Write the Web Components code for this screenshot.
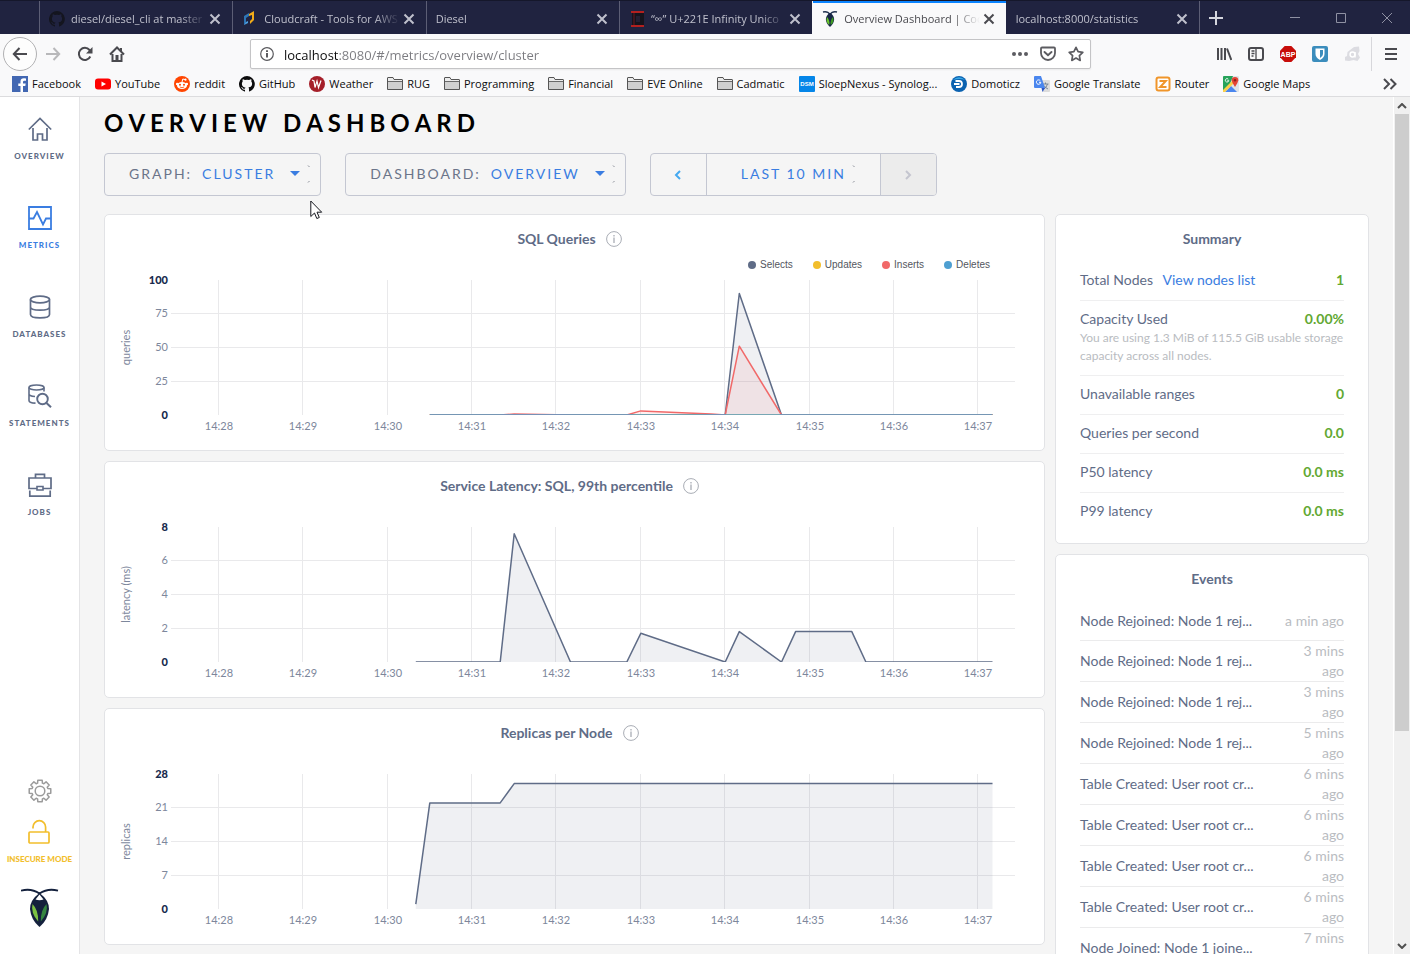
<!DOCTYPE html>
<html lang="en">
<head>
<meta charset="utf-8">
<title>Overview Dashboard | Cockroach Console</title>
<style>
html,body{margin:0;height:100%}
body{overflow:hidden;font-family:Lato,"Open Sans",sans-serif;background:#f5f5f5}
</style>
</head>
<body>
<browser-window></browser-window>
<script>
const svg=(w,h,body,extra='')=>`<svg width="${w}" height="${h}" viewBox="0 0 ${w} ${h}" fill="none" aria-hidden="true" ${extra}>${body}</svg>`;

const gearPath=(()=>{
  const p=[];
  for(let i=0;i<8;i++){
    const a=i*Math.PI/4-Math.PI/2;
    [[-.3,8.2],[-.2,11],[.2,11],[.3,8.2]].forEach(([d,r])=>p.push((12+r*Math.cos(a+d)).toFixed(2)+' '+(12+r*Math.sin(a+d)).toFixed(2)));
  }
  return 'M'+p.join('L')+'Z';
})();

const octocat='<path fill="currentColor" d="M8 0a8 8 0 0 0-2.5 15.6c.4.1.5-.2.5-.4v-1.5c-2.2.5-2.7-.9-2.7-.9-.4-.9-.9-1.2-.9-1.2-.7-.5.1-.5.1-.5.8.1 1.2.8 1.2.8.7 1.3 1.9.9 2.3.7.1-.5.3-.9.5-1.1-1.8-.2-3.6-.9-3.6-4 0-.9.3-1.6.8-2.1-.1-.2-.4-1 .1-2.1 0 0 .7-.2 2.2.8a7.600 7.600 0 0 1 4 0c1.500-1 2.200-.8 2.200-.8.4 1.100.2 1.900.1 2.100.5.600.8 1.300.8 2.100 0 3.100-1.900 3.700-3.700 3.900.3.300.6.800.6 1.500v2.200c0 .2.100.5.600.4A8 8 0 0 0 8 0z"/>';

const ICONS={
  close:svg(12,12,'<path d="M1.500 1.500l9 9m0-9l-9 9" stroke="currentColor" stroke-width="2"/>'),
  github:svg(16,16,octocat),
  cloudcraft:svg(16,16,'<path d="M2 5l5-3v3L4 7v5l-2 2z" fill="#2e75b5"/><path d="M2 14l4-2v-2l-2 1z" fill="#4c9fe0"/><path d="M7 3l5-3v9l-4 4v-3l2-2V4L7 5z" fill="#f2ab18"/>'),
  infinity:svg(16,16,'<path d="M3 2h12v12H3z" fill="#15141d"/><path d="M2 1h13M2 15h13" stroke="#b3201f" stroke-width="2"/><path d="M7 5h4v6H7z" fill="#241f33"/><path d="M5 2v12" stroke="#6a1720"/>'),
  roach:svg(16,16,'<path d="M1 1c4-1 6 1 7 2.500C9 2 11 0 15 1" stroke="#213250" stroke-width="1.300"/><path d="M8 2c6 3 5 10 0 14C3 12 2 5 8 2z" fill="#172746"/><path d="M5 6c2 2 3 5 2.200 8C4.500 12 4 9 5 6z" fill="#6bc52c"/><path d="M11 6c-2 2-3 5-2.200 8C11.500 12 12 9 11 6z" fill="#3f9b22"/>'),
  back:svg(16,16,'<path d="M15 8H2M7.500 2L1.800 8l5.700 6" stroke="#4a4a4f" stroke-width="2"/>'),
  forward:svg(16,16,'<path d="M1 8h13M8.500 2l5.700 6-5.700 6" stroke="#b8b8ba" stroke-width="2"/>'),
  reload:svg(16,16,'<path d="M13.300 10.500A6 6 0 1 1 12.500 4L14 5.500" stroke="#4a4a4f" stroke-width="2"/><path d="M15.500 1v6.500H9z" fill="#4a4a4f"/>'),
  home:svg(16,16,'<path d="M1 8.500L8 1.500l7 7M3.500 8v7h9V8" stroke="#4a4a4f" stroke-width="2"/><path d="M6.500 9h3v6h-3zM11 2h2v3h-2z" fill="#4a4a4f"/>'),
  info:svg(16,16,'<circle cx="8" cy="8" r="6.300" stroke="#5a5a5e" stroke-width="1.200"/><path d="M8 7v4.500M8 4.300v1.600" stroke="#4a4a4f" stroke-width="1.800"/>'),
  dots:svg(16,16,'<g fill="#5c5c61"><circle cx="2" cy="8" r="2"/><circle cx="8" cy="8" r="2"/><circle cx="14" cy="8" r="2"/></g>'),
  pocket:svg(16,16,'<path d="M1 2.500q0-1 1-1h12q1 0 1 1V7a7 7 0 0 1-14 0z" stroke="#5c5c61" stroke-width="1.800"/><path d="M4.500 6L8 9.300 11.500 6" stroke="#5c5c61" stroke-width="1.900" stroke-linecap="round"/>'),
  star:svg(16,16,'<path d="M8 1.300l2.100 4.300 4.700.7-3.400 3.300.8 4.800L8 12.100l-4.200 2.300.8-4.800L1.200 6.300l4.700-.7z" stroke="#5c5c61" stroke-width="1.700" stroke-linejoin="round"/>'),
  library:svg(16,16,'<path d="M2 2v12M5.500 2v12M9 2v12M11 2.500L15.300 14" stroke="#4a4a4f" stroke-width="2"/>'),
  sidebar:svg(16,16,'<rect x="1" y="2" width="14" height="12" rx="2" stroke="#4a4a4f" stroke-width="2"/><path d="M8 2v12M3.500 5h3M3.500 7.500h3M3.500 10h2" stroke="#4a4a4f" stroke-width="1.300"/>'),
  abp:svg(16,16,'<path d="M4.700 0h6.600L16 4.700v6.600L11.300 16H4.700L0 11.300V4.700z" fill="#c70d0a"/><text x="8" y="11" text-anchor="middle" font-family="Liberation Sans,sans-serif" font-weight="700" font-size="7" fill="#fff">ABP</text>'),
  shield:svg(16,16,'<rect width="16" height="16" rx="2" fill="#3c8dbc"/><path d="M3.500 2.500h9V8q0 3.500-4.500 6Q3.500 11.500 3.500 8z" fill="#fff"/><path d="M8 4h3v4q0 2.300-3 4z" fill="#3c8dbc"/>'),
  avast:svg(16,16,'<path d="M10 1l5-.5.5 4.500L14 8l2 3.500-2.500 3.500-4-1L5 15 1 14.500V11l2-1 .5-4L8 2.500z" fill="#dcdce1"/><circle cx="8.500" cy="8.500" r="2.400" stroke="#fff" stroke-width="1.500"/><path d="M11 6v5.500" stroke="#fff" stroke-width="1.500"/>'),
  menu:svg(16,16,'<path d="M2 3h12M2 8h12M2 13h12" stroke="#4a4a4f" stroke-width="2"/>'),
  more:svg(16,16,'<path d="M2 3l5 5-5 5M8.500 3l5 5-5 5" stroke="#4a4a4f" stroke-width="2"/>'),
  facebook:svg(16,16,'<path d="M0 0h16v16H0z" fill="#4267b2"/><path d="M11 16V10h2.300l.4-2.500H11V6q0-1.200 1.300-1.200H14V2.500q-5.500-1-5.500 3v2H6.300V10h2.200v6z" fill="#fff"/>'),
  youtube:svg(16,16,'<rect y="2.500" width="16" height="11" rx="3" fill="#f00"/><path d="M6.500 5.500v5L11 8z" fill="#fff"/>'),
  reddit:svg(16,16,'<circle cx="8" cy="8" r="8" fill="#ff4500"/><ellipse cx="8" cy="9.500" rx="5" ry="3.600" fill="#fff"/><circle cx="3.200" cy="8" r="1.300" fill="#fff"/><circle cx="12.800" cy="8" r="1.300" fill="#fff"/><path d="M8 6l.8-3 2.400.6" stroke="#fff"/><circle cx="11.500" cy="3.700" r="1.100" fill="#fff"/><circle cx="6" cy="8.700" r="1" fill="#ff4500"/><circle cx="10" cy="8.700" r="1" fill="#ff4500"/><path d="M5.800 11q2.200 1.400 4.400 0" stroke="#ff4500" stroke-width=".8"/>'),
  weather:svg(16,16,'<circle cx="8" cy="8" r="8" fill="#a51f29"/><path d="M3 4l2 1 1 6.500L8 5l1.500 6.500L12 4.500" stroke="#fff" stroke-width="1.200"/>'),
  folder:svg(16,16,'<path d="M.5 13.500V2q0-.5.5-.5h5l1 2h8q.5 0 .5.500v9.500z" fill="#d0d0d0" stroke="#555"/><path d="M1 5.500h14" stroke="#6a6a6a"/><path d="M1 2h4.700l1 2H15v1H1z" fill="#ececec"/>'),
  dsm:svg(16,16,'<rect width="16" height="16" rx="1" fill="#0586e8"/><text x="8" y="10" text-anchor="middle" font-family="Liberation Sans,sans-serif" font-weight="700" font-size="6" fill="#fff">DSM</text>'),
  domoticz:svg(16,16,'<circle cx="8" cy="8" r="8" fill="#0b62b0"/><path d="M2 4a8 8 0 0 1 12 0q-5-2-12 0z" fill="#39a8e6"/><path d="M4.500 5H8a3 3 0 0 1 0 6H5M3 8h5.500" stroke="#fff" stroke-width="1.800"/>'),
  translate:svg(16,16,'<path d="M6 4h9q1 0 1 1v10q0 1-1 1H9z" fill="#dcdcdc"/><path d="M8.500 8h6M11.500 6.500V8M13.500 8q-1 4-4 5M10 9.500q1.500 2.500 4 3.500" stroke="#6f7f90" stroke-width=".9"/><path d="M1 0h6l4 12H1q-1 0-1-1V1q0-1 1-1z" fill="#4a86ee"/><path d="M7.500 12H11l-2.500 4z" fill="#2b55c4"/><path d="M6.300 4.700A2.200 2.200 0 1 0 6.800 6.300H5" stroke="#fff"/>'),
  router:svg(16,16,'<rect x="1.500" y="1.500" width="13" height="13" rx="2" fill="#fff" stroke="#f0952a" stroke-width="2"/><path d="M4.500 5h6.300l-5.600 6h6.300" stroke="#f0952a" stroke-width="2"/>'),
  maps:svg(16,16,'<path d="M1 0h14q1 0 1 1v14q0 1-1 1H1q-1 0-1-1V1q0-1 1-1z" fill="#dfe3e8"/><path d="M0 1q0-1 1-1h9L7 8 0 15z" fill="#27a35a"/><path d="M2 16l6-6 6 6z" fill="#4a86ee"/><path d="M0 14L11 3l2 2L2 16H0z" fill="#fbd047"/><path d="M12 1a3.300 3.300 0 0 1 3.300 3.300Q15 7 12 11 9 7 8.700 4.300A3.300 3.300 0 0 1 12 1z" fill="#e34335"/><circle cx="12" cy="4.300" r="1.200" fill="#8c2019"/><path d="M5.300 3.200A1.700 1.700 0 1 0 5.700 4.600H4.400" stroke="#fff" stroke-width=".9"/>'),
  overview:svg(24,24,'<path d="M.800 12.500L12 1.500l11.200 11M5 11v12h4.500v-6h5v6H19V11" stroke="currentColor" stroke-width="1.700"/>'),
  metrics:svg(24,24,'<path d="M1 1h22v22H1zM1 12.500h4.500L9 6l6 12.500 3-6h5" stroke="currentColor" stroke-width="1.800"/>'),
  databases:svg(24,24,'<path d="M2.500 4.500v15C2.500 24 21.500 24 21.500 19.500v-15M2.500 12c0 4.200 19 4.200 19 0" stroke="currentColor" stroke-width="1.700"/><ellipse cx="12" cy="4.500" rx="9.500" ry="3.300" stroke="currentColor" stroke-width="1.700"/>'),
  statements:svg(24,24,'<ellipse cx="8.500" cy="3.500" rx="7.500" ry="2.500" stroke="currentColor" stroke-width="1.600"/><path d="M1 3.500v13c0 1.700 3 2.600 6.500 2.600M16 3.500v4M1 10c0 1.700 3 2.300 6 2.500" stroke="currentColor" stroke-width="1.600"/><circle cx="14.500" cy="15" r="5.300" stroke="currentColor" stroke-width="1.900"/><path d="M18.500 19l4.500 4.300" stroke="currentColor" stroke-width="2"/>'),
  jobs:svg(24,24,'<path d="M7.500 5V1.300h9V5M9 15.500H1V5h22v10.500h-8M1.800 17.500v5.700h20.400v-5.700" stroke="currentColor" stroke-width="1.700"/><path d="M9 13.500h6v3.500H9z" stroke="currentColor" stroke-width="1.600"/>'),
  gear:svg(24,24,`<path d="${gearPath}" stroke="#9b9b9b" stroke-width="1.500" stroke-linejoin="round"/><circle cx="12" cy="12" r="4.800" stroke="#9b9b9b" stroke-width="1.500"/>`),
  lock:svg(24,26,'<rect x="2" y="13" width="20" height="11" rx="1" stroke="#f2be2c" stroke-width="1.700"/><path d="M6 9.500V8a6.300 6.300 0 0 1 12.600 0v5" stroke="#f2be2c" stroke-width="1.700"/>'),
  logo:svg(38,40,'<path d="M0 2.700C8 .500 14 2.500 18.500 5.500 23 2.500 29 .500 37 2.700" stroke="#14213d" stroke-width="1.900"/><path d="M18.500 5Q28 12 28 21 27 32 18.500 39 10 32 9 21 9 12 18.500 5z" fill="#14213d"/><path d="M18.500 6.500l4 5q-4 1.500-8 0z" fill="#fff"/><path d="M11.500 16q6 6 5.700 17.500Q9.500 25 11.500 16z" fill="#7cc142"/><path d="M25.500 16q-6 6-5.700 17.500Q27.500 25 25.500 16z" fill="#348540"/>'),
  hint:svg(16,16,'<circle cx="8" cy="8" r="7.400" stroke="#a9adb5"/><path d="M8 6.500V12M8 4v1.400" stroke="#a9adb5" stroke-width="1.300"/>'),
  caret:svg(10,5,'<path d="M0 0h10L5 5z" fill="#3a7de1"/>'),
  corners:svg(4,18,'<path d="M1 .500l1.500 1.500M1 17.500L2.500 16" stroke="#8a8e98"/>'),
  prev:svg(8,10,'<path d="M6 1L2 5l4 4" stroke="#45a9f0" stroke-width="2"/>'),
  next:svg(8,10,'<path d="M2 1l4 4-4 4" stroke="#c4c5cf" stroke-width="2"/>'),
  plus:svg(16,16,'<path d="M8 1v14M1 8h14" stroke="#d5d6de" stroke-width="2"/>'),
  min:svg(12,12,'<path d="M1 5.500h10" stroke="#8f91a3"/>'),
  max:svg(12,12,'<path d="M1.500 1.500h9v9h-9z" stroke="#8f91a3"/>'),
  quit:svg(12,12,'<path d="M1 1l10 10M11 1L1 11" stroke="#8f91a3"/>'),
  up:svg(10,6,'<path d="M1 5l4-4 4 4" stroke="#505050" stroke-width="2"/>'),
  down:svg(10,6,'<path d="M1 1l4 4 4-4" stroke="#505050" stroke-width="2"/>'),
  pointer:svg(13,20,'<path d="M.800 1v15.500l3.700-3.500 2.300 5.500 2.500-1-2.300-5.300h4.700z" fill="#fff" stroke="#16181f"/>')
};

const base='*{box-sizing:border-box}svg{display:block;flex:none}button{font:inherit;color:inherit;background:none;border:0;padding:0;margin:0}';
const element=(tag,css,html)=>customElements.define(tag,class extends HTMLElement{
  connectedCallback(){
    if(this.shadowRoot)return;
    const root=this.attachShadow({mode:'open'});
    root.innerHTML=`<style>${base}:host{box-sizing:border-box}${css}</style>${typeof html==='function'?html(this):html}`;
  }
});
const at=(el,name)=>el.getAttribute(name)||'';

element('app-icon',':host{display:block;flex:none}',el=>ICONS[at(el,'name')]);

/* Browser chrome */
element('browser-tab',`
:host{display:flex;flex:1;min-width:0;align-items:center;padding:3px 11px 0 9px;border-left:1px solid #5c5e75;color:#bfc0cc;font-size:11px}
:host([active]){background:#f9f9fa;color:#4a4a4f;border-left-color:#f9f9fa;box-shadow:inset 0 2px #0a84ff}
:host([after]){border-left-color:#202340}
app-icon{margin-right:6px}
span{flex:1;min-width:0;overflow:hidden;white-space:nowrap;line-height:18px;mask-image:linear-gradient(90deg,#000 calc(100% - 26px),transparent)}
button{margin-left:3px}`,
el=>`${at(el,'icon')?`<app-icon name="${at(el,'icon')}" style="color:#14151f"></app-icon>`:''}<span><slot></slot></span><button aria-label="Close tab">${ICONS.close}</button>`);

element('tab-strip',`
:host{display:flex;height:34px;background:#202340;border-top:1px solid #15172b;font-family:"Open Sans",sans-serif}
.lead{width:39px}
.tabs{display:flex;flex:1;min-width:0}
.end{display:flex;width:211px;border-left:1px solid #5c5e75;align-items:center;padding-left:8px}
.win{display:flex;flex:1;justify-content:flex-end;gap:34px;padding-right:17px}`,
`<div class="lead"></div><div class="tabs">
<browser-tab icon="github">diesel/diesel_cli at master</browser-tab>
<browser-tab icon="cloudcraft">Cloudcraft - Tools for AWS</browser-tab>
<browser-tab>Diesel</browser-tab>
<browser-tab icon="infinity">“∞” U+221E Infinity Unico</browser-tab>
<browser-tab icon="roach" active>Overview Dashboard | Coc</browser-tab>
<browser-tab after>localhost:8000/statistics</browser-tab>
</div><div class="end"><button aria-label="New tab">${ICONS.plus}</button><div class="win"><button aria-label="Minimize">${ICONS.min}</button><button aria-label="Maximize">${ICONS.max}</button><button aria-label="Close window">${ICONS.quit}</button></div></div>`);

element('nav-toolbar',`
:host{display:flex;align-items:center;height:40px;background:#f9f9fa;padding:0 3px;font-family:"Open Sans",sans-serif}
button{width:32px;height:32px;display:grid;place-items:center;flex:none}
.back{width:34px;height:34px;border:1px solid #b1b1b3;border-radius:50%;background:#fdfdfd}
.gap{width:117px;flex:none}
.url{display:flex;flex:1;min-width:0;align-items:center;height:30px;background:#fff;border:1px solid #c4c4c6;border-radius:2px;box-shadow:0 1px 2px #0001;padding:0 0 0 8px}
input{flex:1;min-width:0;border:0;outline:0;padding:2px 0 0 9px;font:13px "Open Sans",sans-serif;color:transparent;background:linear-gradient(90deg,#0c0c0d 63px,#7b7b80 63px);background-clip:text;-webkit-background-clip:text}
.url button{width:28px;height:28px}
.rule{width:1px;height:34px;background:#d7d7db;margin:0 3px}`,
`<button class="back" aria-label="Back">${ICONS.back}</button><button aria-label="Forward">${ICONS.forward}</button><button aria-label="Reload">${ICONS.reload}</button><button aria-label="Home">${ICONS.home}</button>
<div class="gap"></div>
<div class="url">${ICONS.info}<input aria-label="Address" value="localhost:8080/#/metrics/overview/cluster"><button aria-label="Page actions">${ICONS.dots}</button><button aria-label="Save to Pocket">${ICONS.pocket}</button><button aria-label="Bookmark">${ICONS.star}</button></div>
<div class="gap"></div>
<button aria-label="Library">${ICONS.library}</button><button aria-label="Sidebars">${ICONS.sidebar}</button><button aria-label="Adblock Plus">${ICONS.abp}</button><button aria-label="Bitwarden">${ICONS.shield}</button><button aria-label="Avast">${ICONS.avast}</button><div class="rule"></div><button aria-label="Menu">${ICONS.menu}</button>`);

element('bookmark-item',`
:host{display:block;flex:none}
a{display:flex;align-items:center;gap:4px;color:#0c0c0d;text-decoration:none;white-space:nowrap;line-height:16px}`,
el=>`<a href="#">${ICONS[at(el,'icon')]}<slot></slot></a>`);

element('bookmarks-bar',`
:host{display:flex;align-items:center;gap:14px;height:23px;padding:0 12px 2px;background:#f9f9fa;border-bottom:1px solid #dcdcde;font:11px "Open Sans",sans-serif}
button{margin-left:auto}`,
[['facebook','Facebook'],['youtube','YouTube'],['reddit','reddit'],['github','GitHub'],['weather','Weather'],['folder','RUG'],['folder','Programming'],['folder','Financial'],['folder','EVE Online'],['folder','Cadmatic'],['dsm','SloepNexus - Synolog...'],['domoticz','Domoticz'],['translate','Google Translate'],['router','Router'],['maps','Google Maps']].map(([i,t])=>`<bookmark-item icon="${i}">${t}</bookmark-item>`).join('')+`<button aria-label="More bookmarks">${ICONS.more}</button>`);

/* Console */
element('nav-item',`
:host{display:block;color:#5f6c87}
:host([current]){color:#3a7de1}
a{display:flex;flex-direction:column;align-items:center;gap:9px;height:89px;padding-top:20px;color:inherit;text-decoration:none;font-size:8px;font-weight:900;line-height:12px;letter-spacing:1px}`,
el=>`<a href="#">${ICONS[at(el,'icon')]}<span><slot></slot></span></a>`);

element('side-nav',`
:host{display:flex;flex-direction:column;justify-content:space-between;width:80px;flex:none;background:#fff;border-right:1px solid #e4e4e6}
.foot{display:flex;flex-direction:column;align-items:center;padding-bottom:26px}
.mode{display:flex;flex-direction:column;align-items:center;gap:8px;margin:16px 0 23px;color:#f2be2c;font-size:8px;font-weight:900;line-height:12px;text-decoration:none;white-space:nowrap}`,
`<nav><nav-item icon="overview">OVERVIEW</nav-item><nav-item icon="metrics" current>METRICS</nav-item><nav-item icon="databases">DATABASES</nav-item><nav-item icon="statements">STATEMENTS</nav-item><nav-item icon="jobs">JOBS</nav-item></nav>
<div class="foot"><button aria-label="Settings">${ICONS.gear}</button><a class="mode" href="#">${ICONS.lock}INSECURE MODE</a>${ICONS.logo}</div>`);

const selectCss=`select{appearance:none;field-sizing:content;border:0;outline:0;background:none;padding:0;margin:0;font:inherit;letter-spacing:inherit;color:#3a7de1}`;
element('filter-select',`
:host{display:flex;align-items:center;height:43px;padding:0 9px 2px 24px;border:1px solid #c4c7d2;border-radius:4px;font-size:14px;letter-spacing:2px;color:#6b7489}
${selectCss}
label{margin-right:10px}
.caret{margin:0 7px 0 15px}`,
el=>`<label for="s">${at(el,'label')}:</label><select id="s"><option>${at(el,'value')}</option></select><span class="caret">${ICONS.caret}</span>${ICONS.corners}`);

element('time-range',`
:host{display:flex;height:43px;border:1px solid #c4c7d2;border-radius:4px;font-size:14px;letter-spacing:2px;overflow:hidden}
${selectCss}
button{width:55px;display:grid;place-items:center}
.range{display:flex;align-items:center;gap:6px;padding:0 24px 2px 34px;border:solid #c4c7d2;border-width:0 1px}
button:last-child{background:#ececec}`,
`<button aria-label="Previous timeframe">${ICONS.prev}</button><div class="range"><select aria-label="Time range"><option>LAST 10 MIN</option></select>${ICONS.corners}</div><button aria-label="Next timeframe" disabled>${ICONS.next}</button>`);

const cardCss=`:host{display:block;background:#fff;border:1px solid #e2e3e6;border-radius:5px;color:#5f6c87}
h2{margin:0;font-size:14px;line-height:20px;font-weight:700;text-align:center}`;

/* Samples are [ten-second steps after 14:28, value]. */
const METRICS={
  sql:{title:'SQL Queries',unit:'queries',ticks:[0,25,50,75,100],series:[
    {name:'Selects',color:'#5f6c87',points:[[15,0],[36,0],[37,90],[40,0],[55,0]]},
    {name:'Updates',color:'#f2be2c',points:[[15,0],[55,0]]},
    {name:'Inserts',color:'#f16969',points:[[15,0],[20,0],[21,.8],[25,0],[29,0],[30,3],[35,.8],[36,0],[37,51],[40,0],[55,0]]},
    {name:'Deletes',color:'#4e9fd1',points:[[15,0],[55,0]]}]},
  latency:{title:'Service Latency: SQL, 99th percentile',unit:'latency (ms)',ticks:[0,2,4,6,8],series:[
    {color:'#5f6c87',points:[[14,0],[20,0],[21,7.6],[25,0],[29,0],[30,1.7],[36,0],[37,1.8],[40,0],[41,1.8],[45,1.8],[46,0],[55,0]]}]},
  replicas:{title:'Replicas per Node',unit:'replicas',ticks:[0,7,14,21,28],series:[
    {color:'#5f6c87',points:[[14,1],[15,22],[20,22],[21,26],[55,26]]}]}
};

customElements.define('metric-chart',class extends HTMLElement{
  connectedCallback(){
    if(this.shadowRoot)return;
    this.metric=METRICS[this.getAttribute('metric')];
    const root=this.attachShadow({mode:'open'});
    const legend=this.metric.series.filter(s=>s.name).map(s=>`<li><i style="background:${s.color}"></i>${s.name}</li>`).join('');
    root.innerHTML=`<style>${base}${cardCss}
:host{min-width:0}
header{display:flex;justify-content:center;align-items:center;gap:10px;padding:14px 10px 5px 0;height:39px}
ul{display:flex;justify-content:flex-end;gap:20px;height:20px;margin:0;padding:2px 54px 0 0;list-style:none;align-items:center;font:10px/18px "Liberation Sans",sans-serif;color:#53565e}
li{display:flex;align-items:center;gap:4px}
i{width:8px;height:8px;border-radius:50%}
.plot{height:176px;overflow:hidden}
text{font-size:11px;fill:#7d879c}
.end{font-weight:900;fill:#172a4d}
</style><header><h2>${this.metric.title}</h2>${ICONS.hint}</header><ul>${legend}</ul><div class="plot"></div>`;
    this.draw();
    new ResizeObserver(()=>this.draw()).observe(this);
  }
  draw(){
    const box=this.shadowRoot.querySelector('.plot'),w=box.clientWidth;
    if(!w||w===this.drawn)return;
    this.drawn=w;
    const {unit,ticks,series}=this.metric,left=66,right=w-29,top=6,bottom=141,max=ticks[4];
    const X=k=>left+(k*10+34)/600*(right-left),Y=v=>bottom-v/max*(bottom-top);
    let out=`<clipPath id="c"><path d="M${left} 0H${right}V${bottom}H${left}z"/></clipPath>`;
    ticks.forEach((t,i)=>{
      const y=Math.floor(Y(t)),edge=i===0||i===4;
      if(!edge)out+=`<path d="M${left} ${y+.5}H${right}" stroke="#e9e9eb"/>`;
      out+=`<text x="63" y="${y+4}" text-anchor="end"${edge?' class="end"':''}>${t}</text>`;
    });
    for(let m=0;m<10;m++){
      const x=Math.floor(X(m*6)-.5);
      out+=`<path d="M${x+.5} ${top}V${bottom}" stroke="#e9e9eb"/><text x="${x+1}" y="156" text-anchor="middle">14:${28+m}</text>`;
    }
    out+='<g clip-path="url(#c)">';
    series.forEach(s=>{
      const pts=s.points.map(([k,v])=>X(k).toFixed(1)+' '+Y(v).toFixed(1));
      const first=X(s.points[0][0]),last=X(s.points.at(-1)[0]);
      out+=`<path d="M${first} ${bottom}L${pts.join('L')}L${last} ${bottom}Z" fill="${s.color}" fill-opacity=".1"/><path d="M${pts.join('L')}" stroke="${s.color}" stroke-width="1.500" stroke-linejoin="round"/>`;
    });
    out+=`</g><text transform="translate(25 ${(top+bottom)/2}) rotate(-90)" text-anchor="middle">${unit}</text>`;
    box.innerHTML=svg(w,176,out);
  }
});

element('stat-row',`
:host{display:block;padding:8px 0 10px;border-bottom:1px solid #efeff0;font-size:14px;line-height:20px}
:host(:last-of-type){border-bottom:0}
.line{display:flex;justify-content:space-between}
b{color:#62a832}
::slotted(a){color:#3a7de1;text-decoration:none;margin-left:6px}
::slotted(p){margin:0;font-size:12px;line-height:18px;color:#b9bcc1}`,
el=>`<div class="line"><span>${at(el,'label')} <slot></slot></span><b>${at(el,'value')}</b></div><slot name="note"></slot>`);

element('summary-card',`${cardCss}
:host{padding:14px 24px 12px}
h2{margin-bottom:13px}`,
`<h2>Summary</h2>
<stat-row label="Total Nodes" value="1"><a href="#">View nodes list</a></stat-row>
<stat-row label="Capacity Used" value="0.00%"><p slot="note">You are using 1.3 MiB of 115.5 GiB usable storage capacity across all nodes.</p></stat-row>
<stat-row label="Unavailable ranges" value="0"></stat-row>
<stat-row label="Queries per second" value="0.0"></stat-row>
<stat-row label="P50 latency" value="0.0 ms"></stat-row>
<stat-row label="P99 latency" value="0.0 ms"></stat-row>`);

const joined='Node Rejoined: Node 1 rej...',created='Table Created: User root cr...';
element('events-card',`${cardCss}
:host{padding:14px 24px 12px}
h2{margin-bottom:12px}
table{width:100%;border-collapse:separate;border-spacing:0;table-layout:fixed;font-size:14px;line-height:20px}
td{padding:0;height:40px;border-bottom:1px solid #ebebec;white-space:nowrap;vertical-align:middle}
td:last-child{width:62px;text-align:right;white-space:normal;color:#b9bcc1}`,
`<h2>Events</h2><table>${[[joined,'a min ago'],[joined,'3 mins ago'],[joined,'3 mins ago'],[joined,'5 mins ago'],[created,'6 mins ago'],[created,'6 mins ago'],[created,'6 mins ago'],[created,'6 mins ago'],['Node Joined: Node 1 joine...','7 mins ago']].map(([e,t])=>`<tr><td>${e}</td><td>${t}</td></tr>`).join('')}</table>`);

element('overview-page',`
:host{display:block;flex:1;min-width:0;padding:11px 24px 0;overflow:hidden}
h1{margin:0;font-size:24px;line-height:30px;font-weight:700;letter-spacing:5px;font-kerning:none;color:#000;white-space:nowrap}
.filters{display:flex;gap:24px;margin:15px 0 18px}
.grid{display:grid;grid-template-columns:minmax(0,1fr) 314px;gap:10px;align-items:start}
.col{display:grid;grid-template-columns:minmax(0,1fr);gap:10px}`,
`<h1>OVERVIEW DASHBOARD</h1>
<div class="filters"><filter-select label="GRAPH" value="CLUSTER"></filter-select><filter-select label="DASHBOARD" value="OVERVIEW"></filter-select><time-range></time-range></div>
<div class="grid"><div class="col"><metric-chart metric="sql"></metric-chart><metric-chart metric="latency"></metric-chart><metric-chart metric="replicas"></metric-chart></div>
<div class="col"><summary-card></summary-card><events-card></events-card></div></div>`);

element('scroll-rail',`
:host{display:flex;flex-direction:column;width:17px;flex:none;background:#f0f0f0;border-left:1px solid #fff}
.arrow{height:17px;display:grid;place-items:center;flex:none}
.track{flex:1}
.thumb{height:75%;margin:0 1px;background:#cdcdcd}`,
`<div class="arrow">${ICONS.up}</div><div class="track"><div class="thumb"></div></div><div class="arrow">${ICONS.down}</div>`);

element('browser-window',`
:host{display:flex;flex-direction:column;height:100vh;position:relative}
.view{display:flex;flex:1;min-height:0;background:#f5f5f5}
.pointer{position:absolute;left:310px;top:200px}`,
`<tab-strip></tab-strip><nav-toolbar></nav-toolbar><bookmarks-bar></bookmarks-bar><div class="view"><side-nav></side-nav><overview-page></overview-page><scroll-rail></scroll-rail></div><div class="pointer">${ICONS.pointer}</div>`);
</script>
</body>
</html>
